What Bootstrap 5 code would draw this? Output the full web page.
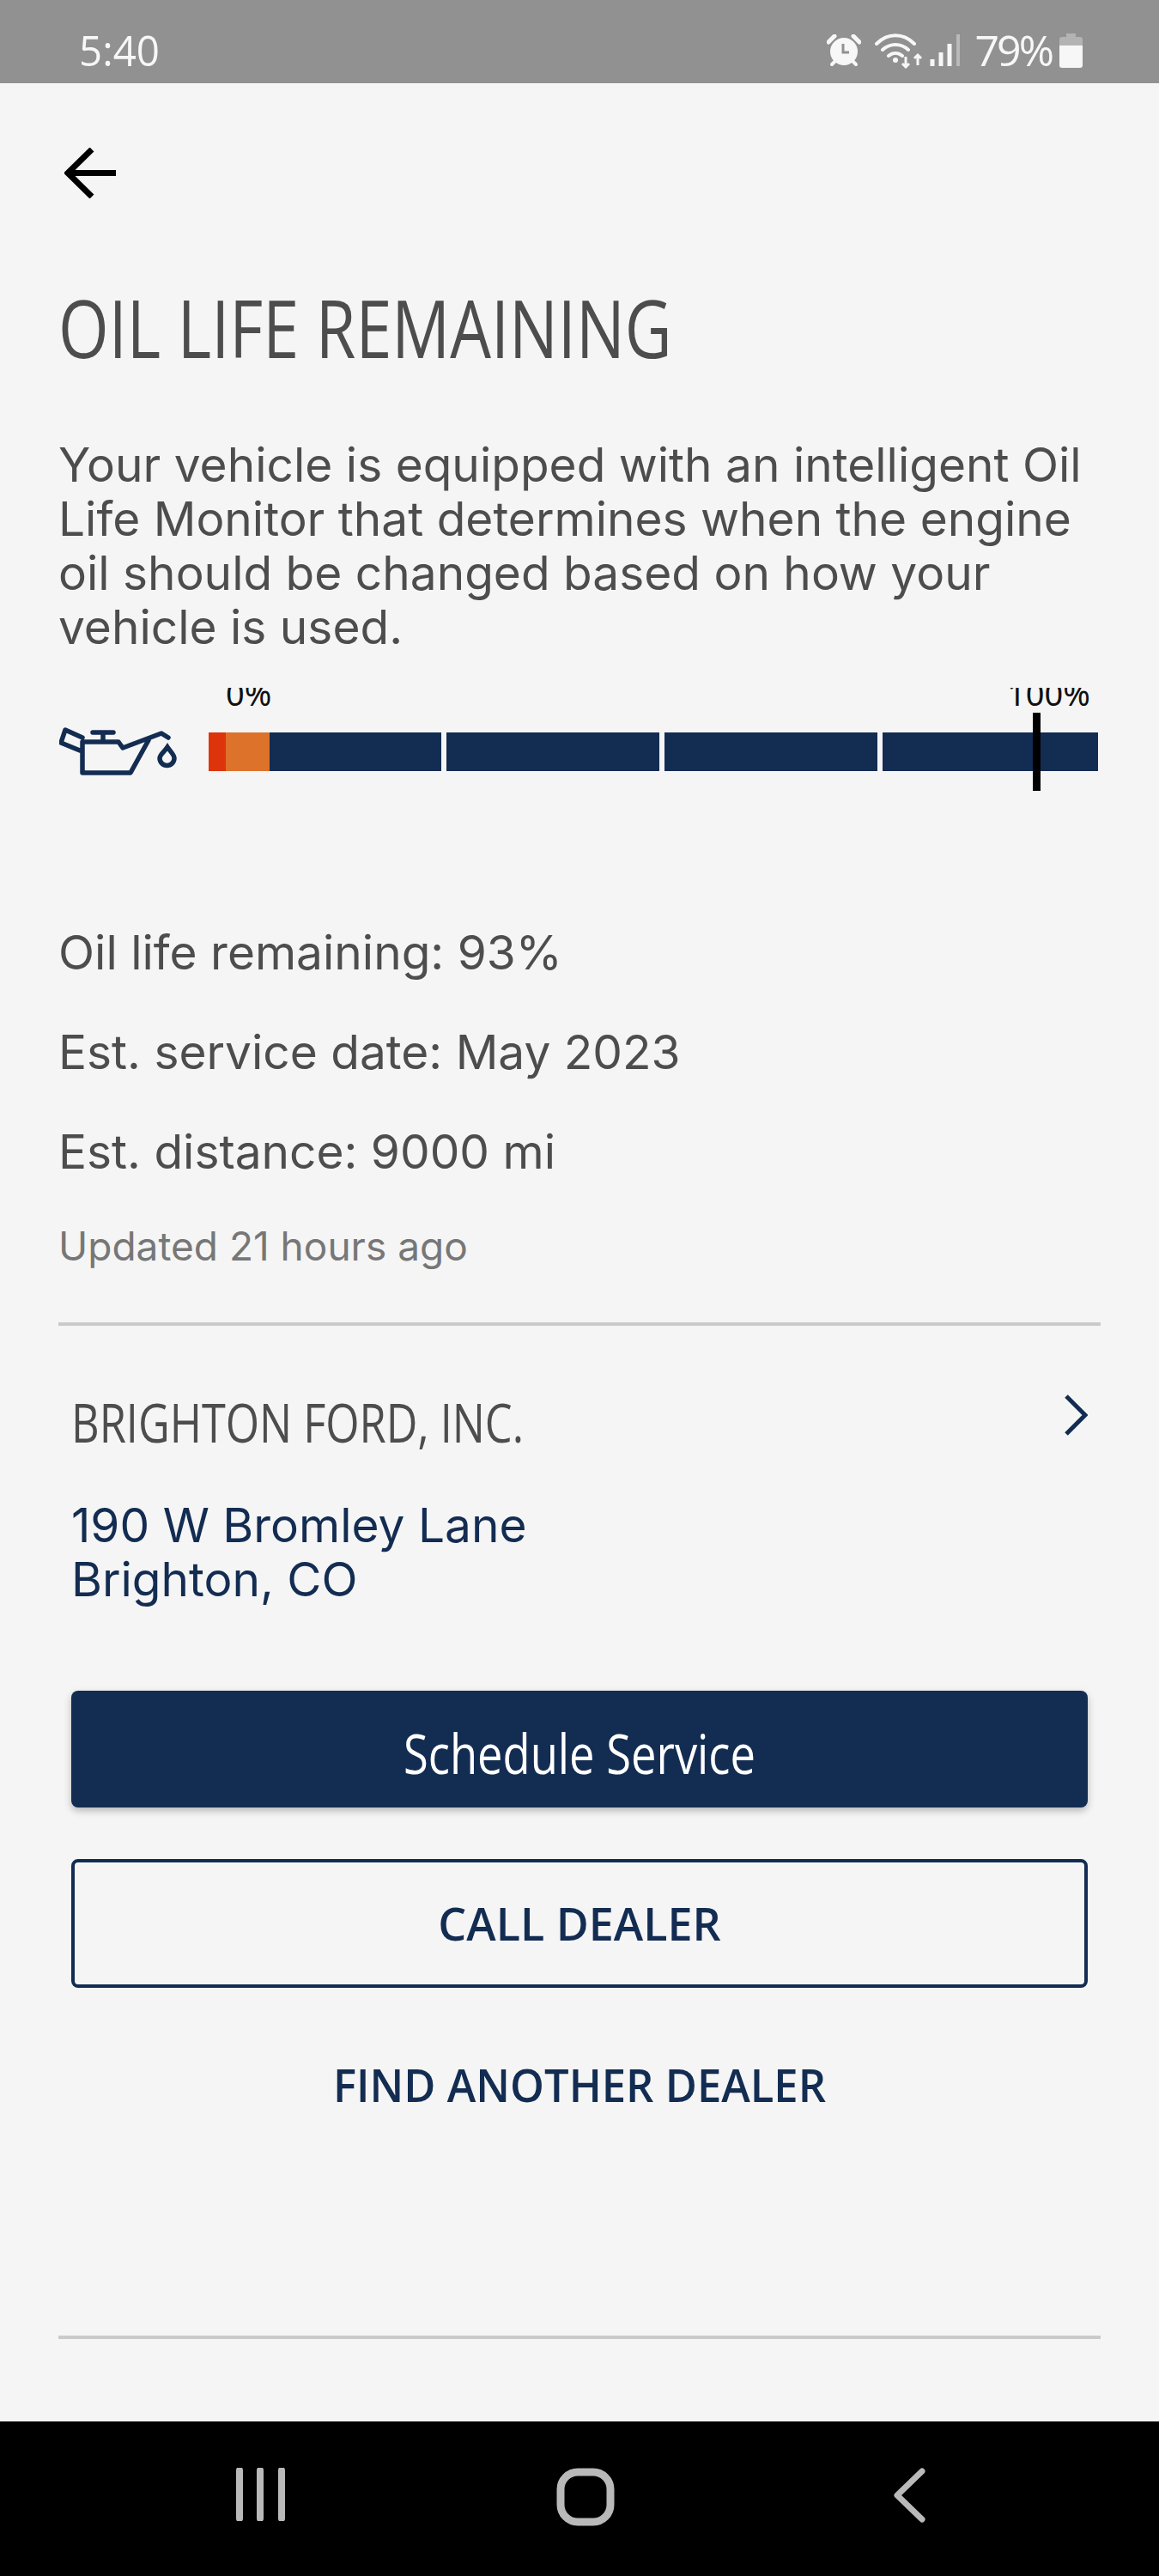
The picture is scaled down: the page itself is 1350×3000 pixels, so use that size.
<!DOCTYPE html>
<html lang="en">
<head>
  <meta charset="UTF-8" />
  <meta name="viewport" content="width=device-width, initial-scale=1" />
  <title>Oil Life Remaining</title>
  <link href="https://cdn.jsdelivr.net/npm/bootstrap@5.3.3/dist/css/bootstrap.min.css" rel="stylesheet" />
  <style>
    body {
      background-color: #f5f5f5;
      font-family: "Inter", sans-serif;
    }
    .phone-screen {
      width: 1350px;
      height: 3000px;
      overflow: hidden;
    }
    .status-strip {
      height: 98px;
      background-color: #919191;
      border-bottom: 1px solid #fff;
      padding: 20px 89px 0 92px;
      color: #f7f7f7;
      font-family: "Open Sans", sans-serif;
      font-size: 50px;
      flex-shrink: 0;
    }
    .status-time { transform: scaleX(.95); transform-origin: left center; }
    .status-pct { letter-spacing: -3px; margin-right: 9px; }
    .back-link { margin: 74px 0 0 75px; height: 59px; }
    .page-title {
      margin: 100px 0 0 68px;
      color: #4d4d4d;
      font-family: "Open Sans", sans-serif;
      font-weight: 400;
      font-size: 94px;
      line-height: 100px;
      white-space: nowrap;
    }
    .squeeze {
      display: inline-block;
      transform-origin: left center;
    }
    .title-text { transform: scaleX(.803); }
    .intro-text {
      margin: 79px 0 0 68px;
      color: #4d4d4d;
      font-size: 55px;
      line-height: 63px;
      white-space: nowrap;
    }
    .gauge-row { margin: 37px 0 0 69px; height: 122px; }
    .gauge-wrap { width: 1036px; margin-left: 36px; height: 122px; }
    .gauge-label {
      position: absolute;
      top: 2px;
      height: 25px;
      overflow: hidden;
      color: #111;
      font-family: "Noto Sans", sans-serif;
      font-size: 38px;
      line-height: 38px;
      display: flex;
      align-items: flex-end;
    }
    .gauge-bar { position: absolute; top: 54px; left: 0; right: 0; height: 45px; gap: 6px; }
    .seg-first { width: 271px; background: #132c52; }
    .seg-next { width: 248px; background: #132c52; }
    .seg-last { flex: 1; background: #132c52; }
    .seg-red { width: 20px; background: #dd340c; }
    .seg-orange { width: 51px; background: #dd722b; }
    .gauge-mark { position: absolute; left: 960px; top: 31px; width: 9px; height: 91px; background: #000; }
    .stat-list { margin: 130px 0 0 68px; color: #4d4d4d; font-size: 55px; }
    .stat-list div { height: 116px; line-height: 116px; white-space: nowrap; }
    .updated-line { margin: 22px 0 0 68px; color: #777; font-size: 46px; line-height: 60px; }
    .rule-line { height: 4px; margin: 59px 68px 0; background: #cacaca; }
    .dealer-box { margin: 0 83px; }
    .dealer-name {
      margin-top: 77px;
      color: #4d4d4d;
      font-family: "Open Sans", sans-serif;
      font-size: 62px;
      line-height: 70px;
      white-space: nowrap;
    }
    .dealer-text { transform: scaleX(.815); }
    .dealer-chevron { margin: 3px 0 0 0; }
    .dealer-addr { margin-top: 54px; color: #132c52; font-size: 55px; line-height: 63px; white-space: nowrap; }
    .btn-solid {
      margin-top: 98px;
      height: 136px;
      padding-top: 16px;
      background: #132c52;
      border: 0;
      border-radius: 8px;
      color: #fff;
      font-family: "Open Sans", sans-serif;
      font-size: 64px;
      box-shadow: 0 4px 8px rgba(0,0,0,.25);
    }
    .btn-line {
      margin-top: 60px;
      height: 150px;
      background: transparent;
      border: 4px solid #132c52;
      border-radius: 8px;
      color: #132c52;
      font-family: "Open Sans", sans-serif;
      font-weight: 600;
      font-size: 52px;
    }
    .btn-plain {
      margin-top: 38px;
      height: 150px;
      background: transparent;
      border: 0;
      color: #132c52;
      font-family: "Open Sans", sans-serif;
      font-weight: 600;
      font-size: 52px;
    }
    .btn-solid .squeeze, .btn-line .squeeze, .btn-plain .squeeze { transform-origin: center; }
    .squeeze-a { transform: scaleX(.82); }
    .squeeze-b { transform: scaleX(1); }
    .squeeze-c { transform: scaleX(.976); }
    .rule-bottom { margin-top: auto; margin-bottom: 96px; }
    .soft-nav { height: 180px; background: #000; flex-shrink: 0; position: relative; }
    .soft-nav svg { position: absolute; top: 54px; }
  </style>
</head>
<body>
  <div class="phone-screen d-flex flex-column">
    <div class="status-strip d-flex align-items-center justify-content-between">
      <span class="status-time">5:40</span>
      <div class="d-flex align-items-center">
        <svg width="40" height="38" viewBox="0 0 40 38" class="me-3"><path d="M2 9 9 2M38 9 31 2" stroke="#f7f7f7" stroke-width="5" stroke-linecap="round"/><circle cx="20" cy="20" r="16" fill="#f7f7f7"/><path d="M6 35l4-4M34 35l-4-4" stroke="#f7f7f7" stroke-width="4" stroke-linecap="round"/><path d="M19 11v10h7" fill="none" stroke="#919191" stroke-width="3"/></svg>
        <svg width="56" height="42" viewBox="0 0 56 42" class="me-2"><path d="M2 13C15 0 33 0 46 13M9 20c9-8 21-8 30 0M16 27c5-4 11-4 16 0" fill="none" stroke="#f7f7f7" stroke-width="4" stroke-linecap="round"/><circle cx="24" cy="32" r="3" fill="#f7f7f7"/><path d="M36 28v12m-4-4 4 4 4-4M50 38V26m-4 4 4-4 4 4" fill="none" stroke="#f7f7f7" stroke-width="3"/></svg>
        <svg width="36" height="38" viewBox="0 0 36 38" class="me-3"><path d="M3 37v-8M13 37V21M23 37V11" stroke="#f7f7f7" stroke-width="5"/><path d="M33 37V0" stroke="#b9b9b9" stroke-width="4"/></svg>
        <span class="status-pct">79%</span>
        <svg width="27" height="40" viewBox="0 0 27 40"><path d="M8 0h11v4h5a3 3 0 0 1 3 3v7H0V7a3 3 0 0 1 3-3h5z" fill="#b3b3b3"/><path d="M0 14h27v23a3 3 0 0 1-3 3H3a3 3 0 0 1-3-3z" fill="#f7f7f7"/></svg>
      </div>
    </div>

    <div class="back-link">
      <svg width="61" height="59" viewBox="0 0 61 59"><path d="M60 29.5H5M32 2 4 29.5 32 57" fill="none" stroke="#000" stroke-width="7"/></svg>
    </div>

    <h1 class="page-title"><span class="squeeze title-text">OIL LIFE REMAINING</span></h1>

    <p class="intro-text mb-0">Your vehicle is equipped with an intelligent Oil<br>Life Monitor that determines when the engine<br>oil should be changed based on how your<br>vehicle is used.</p>

    <div class="gauge-row d-flex">
      <svg width="138" height="56" viewBox="0 0 138 56" class="mt-5 flex-shrink-0"><path d="M27 17V53H83L104 15M27 17H69L74 24 119 7 127 12M27 12 7 3 2 18 24 27M39 6H63M51 6V17" fill="none" stroke="#132c52" stroke-width="5.5" stroke-linecap="round" stroke-linejoin="round"/><path d="M126 23c4 6 8 9 8 13a8.500 8.500 0 0 1-17 0c0-4 5-7 9-13z" fill="none" stroke="#132c52" stroke-width="5.500"/></svg>
      <div class="gauge-wrap position-relative">
        <div class="gauge-label" style="left: 20px">0%</div>
        <div class="gauge-label" style="left: 930px">100%</div>
        <div class="gauge-bar d-flex">
          <div class="seg-first d-flex"><div class="seg-red"></div><div class="seg-orange"></div></div>
          <div class="seg-next"></div>
          <div class="seg-next"></div>
          <div class="seg-last"></div>
        </div>
        <div class="gauge-mark"></div>
      </div>
    </div>

    <div class="stat-list">
      <div>Oil life remaining: 93%</div>
      <div>Est. service date: May 2023</div>
      <div>Est. distance: 9000 mi</div>
    </div>
    <div class="updated-line">Updated 21 hours ago</div>
    <div class="rule-line"></div>

    <div class="dealer-box d-flex flex-column">
      <div class="dealer-name d-flex justify-content-between align-items-start">
        <span class="squeeze dealer-text">BRIGHTON FORD, INC.</span>
        <svg width="28" height="48" viewBox="0 0 28 48" class="dealer-chevron"><path d="M3 2 25 24 3 46" fill="none" stroke="#132c52" stroke-width="5"/></svg>
      </div>
      <div class="dealer-addr">190 W Bromley Lane<br>Brighton, CO</div>
      <button type="button" class="btn btn-solid w-100"><span class="squeeze squeeze-a">Schedule Service</span></button>
      <button type="button" class="btn btn-line w-100"><span class="squeeze squeeze-b">CALL DEALER</span></button>
      <button type="button" class="btn btn-plain w-100"><span class="squeeze squeeze-c">FIND ANOTHER DEALER</span></button>
    </div>

    <div class="rule-line rule-bottom"></div>

    <div class="soft-nav">
      <svg style="left: 274px" width="60" height="62" viewBox="0 0 60 62"><path d="M5 3v56M29 3v56M54 3v56" stroke="#b9b9b9" stroke-width="8" stroke-linecap="round"/></svg>
      <svg style="left: 648px" width="68" height="68" viewBox="0 0 68 68"><rect x="5" y="5" width="58" height="58" rx="20" fill="none" stroke="#b9b9b9" stroke-width="9"/></svg>
      <svg style="left: 1040px" width="38" height="64" viewBox="0 0 38 64"><path d="M34 4 5 32 34 60" fill="none" stroke="#b9b9b9" stroke-width="7" stroke-linecap="round" stroke-linejoin="round"/></svg>
    </div>
  </div>
  <script src="https://cdn.jsdelivr.net/npm/bootstrap@5.3.3/dist/js/bootstrap.bundle.min.js"></script>
</body>
</html>
